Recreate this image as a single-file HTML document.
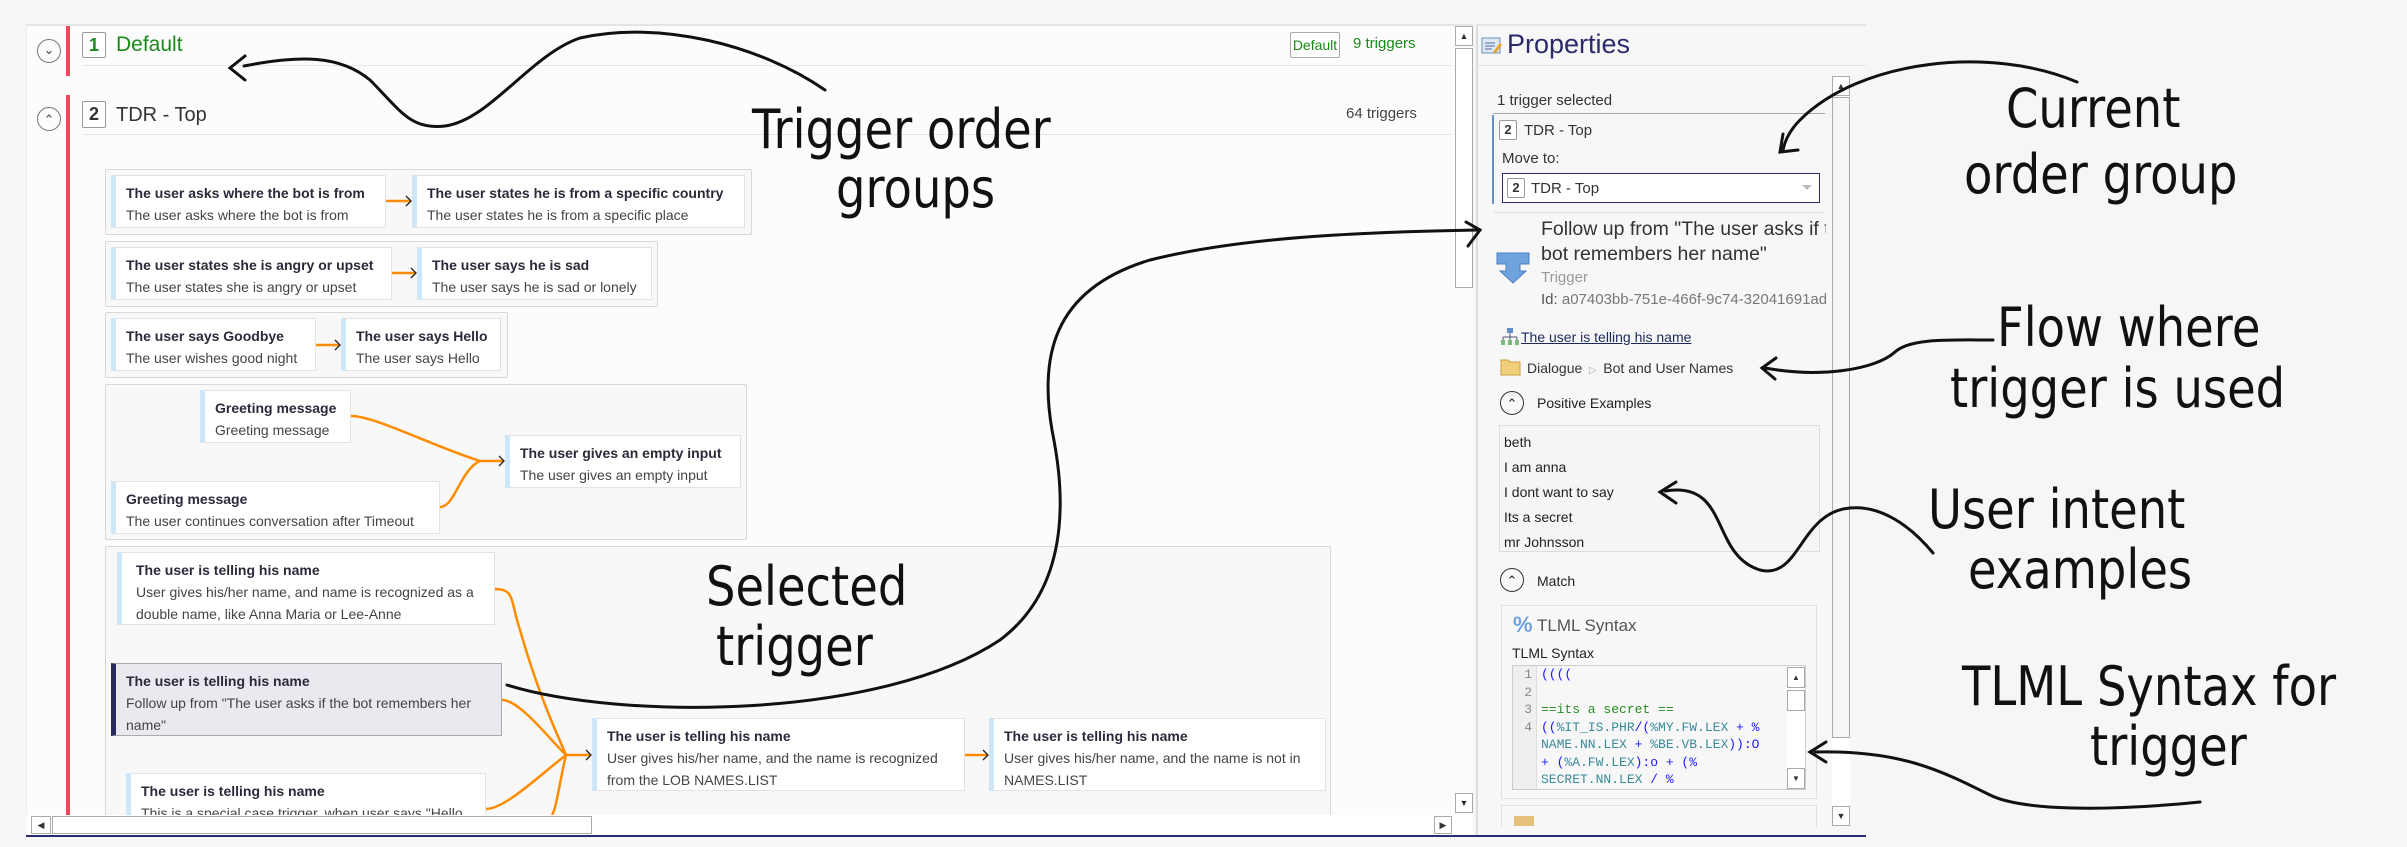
<!DOCTYPE html>
<html><head><meta charset="utf-8"><style>
*{margin:0;padding:0;box-sizing:border-box}
body{width:2407px;height:847px;background:#f6f6f6;font-family:"Liberation Sans",sans-serif;position:relative;overflow:hidden;color:#333}
.a{position:absolute}
.lp{left:26px;top:24px;width:1447px;height:791px;background:#fcfcfc;border-top:2px solid #e4e4e4;border-left:1px solid #eee}
.box{position:absolute;background:#f8f8f8;border:1px solid #d8d8d8;border-radius:2px}
.card{position:absolute;background:#fff;border:1px solid #e3e3e3;border-left:5px solid #cde6f8;padding:6px 0 0 10px;font-size:14px;line-height:22px;color:#444;white-space:nowrap}
.card b{display:block;color:#2a2a3a;font-size:14px}
.card.w{white-space:normal}
.sel{background:#e9e9ef;border:1px solid #aaa;border-left:5px solid #2b2a5e}
.badge{position:absolute;border:1px solid #999;border-radius:2px;background:#fff;font-weight:bold;text-align:center}
.circ{position:absolute;width:24px;height:24px;border:1.5px solid #777;border-radius:50%;text-align:center;font-size:13px;line-height:20px;color:#444}
.sb{position:absolute;background:#fff;border:1px solid #aaa}
.hand{position:absolute;font-family:"DejaVu Sans",sans-serif;font-size:54px;color:#111;line-height:62px;letter-spacing:0;white-space:nowrap;transform:scaleX(0.86);transform-origin:0 0}
.rp{font-size:15px;color:#333}
</style></head><body>
<!-- left panel -->
<div class="a lp"></div>
<div class="a" style="left:66px;top:26px;width:4px;height:50px;background:#f0485a"></div>
<div class="a" style="left:66px;top:95px;width:4px;height:720px;background:#f0485a"></div>
<div class="circ" style="left:37px;top:39px">&#8964;</div>
<div class="circ" style="left:37px;top:107px;line-height:24px">&#8963;</div>
<div class="badge" style="left:82px;top:32px;width:24px;height:26px;color:#1a8a1a;font-size:18px;line-height:24px">1</div>
<div class="a" style="left:116px;top:32px;font-size:21px;color:#1a8a1a;line-height:26px">Default</div>
<div class="a" style="left:82px;top:65px;width:1370px;height:1px;background:#e6e6e6"></div>
<div class="a" style="left:1290px;top:32px;width:50px;height:26px;border:1px solid #aaa;border-radius:2px;background:#fff;font-size:14px;color:#1a8a1a;line-height:24px;text-align:center">Default</div>
<div class="a" style="left:1353px;top:35px;font-size:15px;color:#1a8a1a">9 triggers</div>
<div class="badge" style="left:82px;top:101px;width:24px;height:27px;color:#333;font-size:18px;line-height:25px">2</div>
<div class="a" style="left:116px;top:102px;font-size:20px;color:#333;line-height:26px">TDR - Top</div>
<div class="a" style="left:1346px;top:105px;font-size:15px;color:#444">64 triggers</div>
<div class="a" style="left:82px;top:134px;width:1370px;height:1px;background:#e6e6e6"></div>

<div class="box" style="left:105px;top:169px;width:647px;height:66px"></div>
<div class="card" style="left:111px;top:175px;width:275px;height:53px"><b>The user asks where the bot is from</b>The user asks where the bot is from</div>
<div class="card" style="left:412px;top:175px;width:333px;height:53px"><b>The user states he is from a specific country</b>The user states he is from a specific place</div>
<div class="box" style="left:105px;top:241px;width:553px;height:66px"></div>
<div class="card" style="left:111px;top:247px;width:281px;height:53px"><b>The user states she is angry or upset</b>The user states she is angry or upset</div>
<div class="card" style="left:417px;top:247px;width:235px;height:53px"><b>The user says he is sad</b>The user says he is sad or lonely</div>
<div class="box" style="left:105px;top:312px;width:403px;height:66px"></div>
<div class="card" style="left:111px;top:318px;width:205px;height:53px"><b>The user says Goodbye</b>The user wishes good night</div>
<div class="card" style="left:341px;top:318px;width:160px;height:53px"><b>The user says Hello</b>The user says Hello</div>
<div class="box" style="left:105px;top:384px;width:642px;height:156px"></div>
<div class="card" style="left:200px;top:390px;width:151px;height:53px"><b>Greeting message</b>Greeting message</div>
<div class="card" style="left:111px;top:481px;width:329px;height:53px"><b>Greeting message</b>The user continues conversation after Timeout</div>
<div class="card" style="left:505px;top:435px;width:236px;height:53px"><b>The user gives an empty input</b>The user gives an empty input</div>
<div class="box" style="left:105px;top:546px;width:1226px;height:280px"></div>
<div class="card w" style="left:117px;top:552px;width:378px;height:73px;padding-left:14px"><b>The user is telling his name</b>User gives his/her name, and name is recognized as a double name, like Anna Maria or Lee-Anne</div>
<div class="card w sel" style="left:111px;top:663px;width:391px;height:73px"><b>The user is telling his name</b>Follow up from "The user asks if the bot remembers her name"</div>
<div class="card" style="left:126px;top:773px;width:360px;height:50px;border-bottom:none"><b>The user is telling his name</b>This is a special case trigger, when user says "Hello</div>
<div class="card w" style="left:592px;top:718px;width:373px;height:73px"><b>The user is telling his name</b>User gives his/her name, and the name is recognized from the LOB NAMES.LIST</div>
<div class="card w" style="left:989px;top:718px;width:337px;height:73px"><b>The user is telling his name</b>User gives his/her name, and the name is not in NAMES.LIST</div>

<svg class="a" style="left:0;top:0" width="1480" height="847">
<g fill="none" stroke="#ff8c00" stroke-width="2.5">
<path d="M386 201H410M392 273H415M316 345H339"/>
<path d="M351 416C375 416 430 445 480 461H503M440 507C455 507 460 470 480 461"/>
<path d="M495 589C515 589 510 600 520 630C540 700 560 740 566 755H590M502 700C520 700 550 740 566 755M486 809C505 809 540 775 566 755M566 755C560 780 556 810 552 815"/>
<path d="M965 755H987"/>
</g>
<g fill="none" stroke="#222" stroke-width="1.3">
<path d="M406 196L411 201L406 206M411 268L416 273L411 278M335 340L340 345L335 350M499 456L504 461L499 466M586 750L591 755L586 760M983 750L988 755L983 760"/>
</g>
</svg>

<!-- left scrollbars -->
<div class="sb" style="left:1455px;top:26px;width:18px;height:20px;font-size:9px;text-align:center;line-height:18px">&#9650;</div>
<div class="sb" style="left:1455px;top:48px;width:18px;height:240px"></div>
<div class="sb" style="left:1455px;top:793px;width:18px;height:20px;font-size:9px;text-align:center;line-height:18px">&#9660;</div>
<div class="a" style="left:26px;top:815px;width:1447px;height:20px;background:#fff"></div>
<div class="sb" style="left:31px;top:816px;width:20px;height:18px;font-size:9px;text-align:center;line-height:16px">&#9664;</div>
<div class="sb" style="left:52px;top:816px;width:540px;height:18px"></div>
<div class="sb" style="left:1434px;top:816px;width:18px;height:18px;font-size:9px;text-align:center;line-height:16px">&#9654;</div>
<div class="a" style="left:26px;top:835px;width:1840px;height:2px;background:#2b2a6e"></div>

<!-- properties panel -->
<div class="a" style="left:1476px;top:24px;width:390px;height:811px;background:#f7f7f7;border-left:2px solid #ddd;border-top:2px solid #e4e4e4"></div>
<svg class="a" style="left:1481px;top:36px" width="22" height="20"><rect x="1" y="2" width="18" height="15" fill="#dfe8f4" stroke="#6a8fc0"/><path d="M4 7h10M4 10h10M4 13h7" stroke="#4a6fa8"/><path d="M12 16l7-9 2 2-7 9z" fill="#e8a030"/></svg>
<div class="a" style="left:1507px;top:28px;font-size:27px;color:#2b2b6b;line-height:32px">Properties</div>
<div class="a" style="left:1478px;top:65px;width:388px;height:1px;background:#e2e2e2"></div>
<div class="a" style="left:1832px;top:76px;width:18px;height:750px;background:#fff"></div>
<div class="sb" style="left:1832px;top:76px;width:18px;height:20px;font-size:9px;text-align:center;line-height:18px">&#9650;</div>
<div class="sb" style="left:1832px;top:97px;width:18px;height:641px;background:#f7f7f7"></div>
<div class="sb" style="left:1832px;top:806px;width:18px;height:20px;font-size:9px;text-align:center;line-height:18px">&#9660;</div>
<div class="a rp" style="left:1497px;top:92px">1 trigger selected</div>
<div class="a" style="left:1493px;top:113px;width:332px;height:1px;background:#aaa"></div>
<div class="a" style="left:1492px;top:115px;width:2px;height:89px;background:#6a8fc8"></div>
<div class="badge" style="left:1499px;top:120px;width:18px;height:20px;font-size:13px;line-height:18px">2</div>
<div class="a rp" style="left:1524px;top:122px">TDR - Top</div>
<div class="a rp" style="left:1502px;top:150px">Move to:</div>
<div class="a" style="left:1502px;top:173px;width:318px;height:30px;border:1.5px solid #2b2a6e;background:#fff"></div>
<div class="badge" style="left:1507px;top:178px;width:18px;height:20px;font-size:13px;line-height:18px">2</div>
<div class="a rp" style="left:1531px;top:180px">TDR - Top</div>
<div class="a" style="left:1802px;top:185px;border-left:5px solid transparent;border-right:5px solid transparent;border-top:5px solid #bbb"></div>
<div class="a" style="left:1494px;top:212px;width:331px;height:1px;background:#ddd"></div>
<svg class="a" style="left:1496px;top:251px" width="36" height="34"><path d="M1 2h32v11H24v7h6L17 32 4 20h6v-7H1z" fill="#6fa3e0" stroke="#4a7fc0"/></svg>
<div class="a" style="left:1541px;top:217px;font-size:19.5px;line-height:25px;color:#333;width:285px;white-space:nowrap;overflow:hidden">Follow up from "The user asks if the<br>bot remembers her name"</div>
<div class="a" style="left:1541px;top:269px;font-size:15px;color:#999">Trigger</div>
<div class="a" style="left:1541px;top:291px;font-size:15px;color:#555;width:285px;white-space:nowrap;overflow:hidden">Id: <span style="color:#777">a07403bb-751e-466f-9c74-32041691ad1</span></div>
<svg class="a" style="left:1500px;top:327px" width="20" height="20"><rect x="7" y="1" width="6" height="5" fill="#5b8fd0"/><path d="M10 6v4M3 10h14M3 10v3M10 10v3M17 10v3" stroke="#557" fill="none"/><rect x="1" y="13" width="4" height="5" fill="#7cb97c"/><rect x="8" y="13" width="4" height="5" fill="#7cb97c"/><rect x="15" y="13" width="4" height="5" fill="#7cb97c"/></svg>
<div class="a" style="left:1521px;top:329px;font-size:14px;color:#1c2a5a;text-decoration:underline">The user is telling his name</div>
<svg class="a" style="left:1500px;top:358px" width="21" height="18"><path d="M1 2h7l2 2h10v13H1z" fill="#f2cf7a" stroke="#c9a040"/></svg>
<div class="a" style="left:1527px;top:360px;font-size:14px;color:#333">Dialogue <span style="color:#aaa;font-size:10px">&nbsp;&#9655;&nbsp;</span> Bot and User Names</div>
<div class="circ" style="left:1500px;top:391px;color:#222;line-height:24px;border-color:#333">&#8963;</div>
<div class="a" style="left:1537px;top:395px;font-size:14px;color:#222">Positive Examples</div>
<div class="a" style="left:1499px;top:425px;width:321px;height:127px;border:1px solid #ddd;background:#f5f5f5"></div>
<div class="a" style="left:1504px;top:430px;font-size:14px;line-height:25px;color:#222">beth<br>I am anna<br>I dont want to say<br>Its a secret<br>mr Johnsson</div>
<div class="circ" style="left:1500px;top:568px;color:#222;line-height:24px;border-color:#333">&#8963;</div>
<div class="a" style="left:1537px;top:573px;font-size:14px;color:#222">Match</div>
<div class="a" style="left:1501px;top:605px;width:316px;height:194px;border:1px solid #e0e0e0;background:#f8f8f8"></div>
<div class="a" style="left:1513px;top:612px;font-size:22px;color:#6fa3e0;font-weight:bold">%</div>
<div class="a" style="left:1537px;top:616px;font-size:17px;color:#555">TLML Syntax</div>
<div class="a" style="left:1512px;top:645px;font-size:14px;color:#222">TLML Syntax</div>
<div class="a" style="left:1512px;top:665px;width:294px;height:125px;border:1px solid #ccc;background:#f7f7f7;overflow:hidden">
<div class="a" style="left:0;top:0;width:24px;height:125px;border-right:1px solid #ddd;background:#efefef;font-family:'Liberation Mono',monospace;font-size:13px;line-height:17.5px;color:#888;text-align:right;padding-right:4px">1<br>2<br>3<br>4</div>
<div class="a" style="left:28px;top:0;font-family:'Liberation Mono',monospace;font-size:13px;line-height:17.5px;white-space:pre;color:#1a1aff">((((

<span style="color:#2a8a2a">==its a secret ==</span>
((<span style="color:#3a8a9a">%IT_IS.PHR</span>/(<span style="color:#3a8a9a">%MY.FW.LEX</span> + %
<span style="color:#3a8a9a">NAME.NN.LEX</span> + <span style="color:#3a8a9a">%BE.VB.LEX</span>)):O
+ (<span style="color:#3a8a9a">%A.FW.LEX</span>):o + (%
<span style="color:#3a8a9a">SECRET.NN.LEX</span> / %</div>
<div class="a" style="left:274px;top:0;width:20px;height:125px;background:#fff"></div>
<div class="sb" style="left:274px;top:1px;width:18px;height:21px;font-size:8px;text-align:center;line-height:19px">&#9650;</div>
<div class="sb" style="left:274px;top:24px;width:18px;height:21px"></div>
<div class="sb" style="left:274px;top:102px;width:18px;height:21px;font-size:8px;text-align:center;line-height:19px">&#9660;</div>
</div>
<div class="a" style="left:1501px;top:805px;width:316px;height:22px;border:1px solid #e0e0e0;border-bottom:none;background:#f8f8f8;overflow:hidden"><div style="margin:10px 0 0 12px;width:20px;height:10px;background:#e4c07a"></div></div>

<!-- annotations -->
<div class="hand" style="left:752px;top:99px">Trigger order</div>
<div class="hand" style="left:836px;top:158px">groups</div>
<div class="hand" style="left:706px;top:556px">Selected</div>
<div class="hand" style="left:716px;top:616px">trigger</div>
<div class="hand" style="left:2006px;top:78px">Current</div>
<div class="hand" style="left:1964px;top:144px">order group</div>
<div class="hand" style="left:1997px;top:297px">Flow where</div>
<div class="hand" style="left:1950px;top:358px">trigger is used</div>
<div class="hand" style="left:1928px;top:479px">User intent</div>
<div class="hand" style="left:1968px;top:539px">examples</div>
<div class="hand" style="left:1962px;top:656px">TLML Syntax for</div>
<div class="hand" style="left:2090px;top:716px">trigger</div>
<svg class="a" style="left:0;top:0" width="2407" height="847">
<g fill="none" stroke="#111" stroke-width="3" stroke-linecap="round">
<path d="M244 66C300 55 340 55 370 80C400 110 410 130 445 126C490 120 530 55 580 38C660 20 760 45 825 90"/>
<path d="M245 56L230 68L245 80"/>
<path d="M507 685C620 720 880 720 1000 640C1080 580 1060 470 1052 430C1040 360 1050 290 1150 260C1250 235 1380 232 1478 230"/>
<path d="M1466 222L1480 230L1468 246"/>
<path d="M2077 82C1990 45 1860 60 1800 120C1790 130 1785 140 1783 150"/>
<path d="M1783 134L1780 152L1798 150"/>
<path d="M1993 340C1950 340 1910 338 1895 352C1875 370 1820 378 1765 368"/>
<path d="M1776 358L1762 368L1775 379"/>
<path d="M1933 553C1910 525 1880 505 1850 508C1800 512 1800 580 1760 570C1710 555 1730 480 1665 491"/>
<path d="M1676 482L1660 492L1676 503"/>
<path d="M2200 802C2100 812 2020 810 1990 795C1940 770 1900 750 1815 752"/>
<path d="M1826 742L1810 752L1826 762"/>
</g>
</svg>
</body></html>
